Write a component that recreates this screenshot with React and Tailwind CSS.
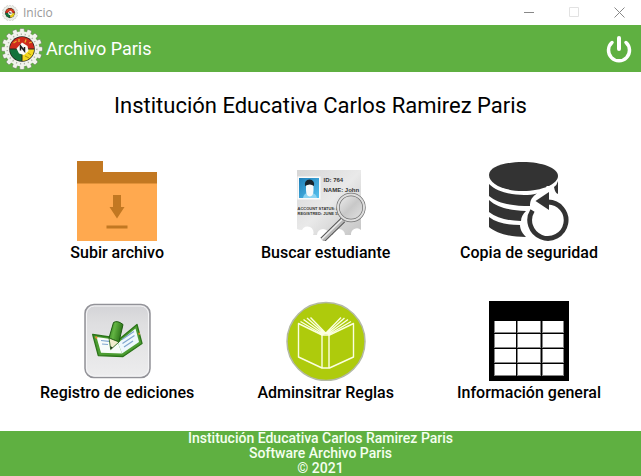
import React from "react";

const teeth = Array.from({ length: 16 }, (_, i) => i * 22.5);

function Crest({ className }) {
  return (
    <svg viewBox="0 0 42 42" className={className} aria-hidden="true">
      {teeth.map((a) => (
        <rect key={a} x="18.700" y="0.500" width="4.600" height="6" rx="1.200" fill="#f1f3ec" stroke="#6b6f64" strokeWidth="0.500" transform={`rotate(${a} 21 21)`} />
      ))}
      <circle cx="21" cy="21" r="17.400" fill="#f1f3ec" />
      <circle cx="21" cy="21" r="14.800" fill="none" stroke="#aeb2a8" strokeWidth="1.500" strokeDasharray="1.200 2.800" />
      <circle cx="21" cy="21" r="12.800" fill="#26271f" />
      <path d="M21 21L8.900 21A12.100 12.100 0 0 1 33.100 21Z" fill="#cf2a1c" />
      <path d="M21 21L8.900 21A12.100 12.100 0 0 0 21 33.100Z" fill="#14733c" />
      <path d="M21 21L33.100 21A12.100 12.100 0 0 1 21 33.100Z" fill="#f3d81d" />
      <path d="M12.500 15l3-2M18 11v3M25 11.500l-1 3M28 15l3-1" stroke="#e8b02a" strokeWidth="1.300" />
      <path d="M9 21h7M26 21h7M21 26v7" stroke="#26271f" strokeWidth="1" />
      <path d="M21 14.500l5.500 3.500 1 5-4.500 4-5-1.500-2.500-5z" fill="#fafaf5" />
      <path d="M19.500 22.500v-4.500l4 5v-4" fill="none" stroke="#1d1d1d" strokeWidth="1.500" />
      <path d="M24 28l4 2M27 25l3 2" stroke="#a89110" strokeWidth="1" />
    </svg>
  );
}

function FolderIcon() {
  return (
    <svg viewBox="0 0 80 80" className="size-20" aria-hidden="true">
      <path d="M0 0h26v11h54v12H0z" fill="#c27822" />
      <path d="M0 22.500h80V80H0z" fill="#ffa94f" />
      <path d="M36 34h8v12h3.500L40 57.500 32.500 46H36zM29.500 64.500h21v3h-21z" fill="#c27822" />
    </svg>
  );
}

function SearchCardIcon() {
  return (
    <svg viewBox="0 0 80 80" className="size-20" aria-hidden="true">
      <defs>
        <linearGradient id="paper" x1="0" y1="0" x2="1" y2="1">
          <stop offset="0" stopColor="#d6d6d6" />
          <stop offset="0.500" stopColor="#e9e9e9" />
          <stop offset="1" stopColor="#c4c4c4" />
        </linearGradient>
        <linearGradient id="photo" x1="0" y1="0" x2="1" y2="1">
          <stop offset="0" stopColor="#1f7fb8" />
          <stop offset="1" stopColor="#55c0ee" />
        </linearGradient>
        <linearGradient id="lens" x1="0" y1="0" x2="1" y2="1">
          <stop offset="0" stopColor="#f2f2f2" />
          <stop offset="0.500" stopColor="#c8c8c8" />
          <stop offset="1" stopColor="#e4e4e4" />
        </linearGradient>
      </defs>
      <path d="M11 9H75V69a6 6 0 0 0-10 5H59a6 6 0 0 0-12 0H43a6 6 0 0 0-12 0H27a6 6 0 0 0-11-5q-3 0-5-1z" fill="url(#paper)" />
      <rect x="11.500" y="15.500" width="23" height="23" fill="#fbfbfb" />
      <rect x="13" y="17" width="20" height="20" fill="url(#photo)" />
      <path d="M17 37q1-5 5-5h3q5 0 6 5z" fill="#8bd3f2" />
      <path d="M20 23h7.500v6q0 6.500-3.700 6.500T20 29z" fill="#f7f9fa" />
      <path d="M19 25q-1-6 4.500-6.500Q29 19 28 25q-4-3-9 0z" fill="#17232b" />
      <g fill="#333" fontFamily="Liberation Sans, sans-serif" fontWeight="700">
        <text x="37.500" y="21" fontSize="6">ID: 764</text>
        <text x="37.500" y="31" fontSize="6">NAME: John</text>
        <text x="11.500" y="49" fontSize="4">ACCOUNT STATUS: ACTIVE</text>
        <text x="11.500" y="53.500" fontSize="4">REGISTRED: JUNE 15, 2009</text>
      </g>
      <path d="M57 59L36.500 79" stroke="#555" strokeWidth="6" />
      <path d="M57 59L36.500 79" stroke="#b9b9b9" strokeWidth="4" />
      <path d="M56 58.500L35.500 78.500" stroke="#efefef" strokeWidth="1.300" />
      <circle cx="65" cy="46.500" r="13" fill="url(#lens)" stroke="#707070" strokeWidth="3.400" />
      <circle cx="65" cy="46.500" r="13" fill="none" stroke="#dfdfdf" strokeWidth="2" />
    </svg>
  );
}

function BackupIcon() {
  return (
    <svg viewBox="0 0 80 80" className="size-20" aria-hidden="true">
      <g fill="#333">
        <path d="M0 14C0 6 15 1 34 1s35 6 35 14S53 30 34 30 0 23 0 14z" />
        <path d="M0 23c8 8 22 11 35 11 5 0 9-.5 13-1.500C43 36 41 39 41 45c-16 0-32-2-41-10z" />
        <path d="M0 39c9 8 20 10 37 11-3 3-5 6-5 10-13 0-24-3-32-9z" />
        <path d="M0 56c8 6 18 8 31 8 0 5 3 9 6 12C20 76 7 72 0 66z" />
        <path d="M69 20v13q-3-1-4-7 3-2 4-6z" />
      </g>
      <path d="M60.500 25v8" stroke="#fff" strokeWidth="6" />
      <path d="M59 41A18.200 18.200 0 1 1 43.500 49.500" fill="none" stroke="#333" strokeWidth="4.800" />
      <path d="M60 31v18L46.500 40z" fill="#333" />
    </svg>
  );
}

function NotebookIcon() {
  return (
    <svg viewBox="0 0 80 80" className="size-20" aria-hidden="true">
      <defs>
        <linearGradient id="tile" x1="0" y1="0" x2="0" y2="1">
          <stop offset="0" stopColor="#d3d3d6" />
          <stop offset="0.250" stopColor="#dedee0" />
          <stop offset="1" stopColor="#ededee" />
        </linearGradient>
        <linearGradient id="pencil" x1="0" y1="0" x2="1" y2="0.300">
          <stop offset="0" stopColor="#2c7519" />
          <stop offset="0.450" stopColor="#62b442" />
          <stop offset="1" stopColor="#2a7017" />
        </linearGradient>
      </defs>
      <rect x="8" y="3.500" width="65" height="73" rx="9" fill="url(#tile)" stroke="#929298" strokeWidth="1.500" />
      <rect x="9.500" y="5" width="62" height="70" rx="8" fill="none" stroke="#f5f5f7" strokeWidth="1" />
      <path d="M15.700 33.500l17 2.500 8 3.500L60 23.500l5 19-19 13L21.300 54.700z" fill="#4c9d32" stroke="#2b7419" strokeWidth="1.300" strokeLinejoin="round" />
      <path d="M19.500 36l14 2 7.500 4 4 10.500-21-.8z" fill="#f8fcfa" />
      <path d="M41 42l17.500-14.500L62 41 45 52.500z" fill="#eef8fc" />
      <path d="M24 39.500l8 .8M25 43l6 .5M45 38.500l12-8M45.500 42.500l12-8M47 46l9-6" stroke="#7fa6cf" strokeWidth="1.200" />
      <path d="M36.500 21.500q4-2.500 9.500 2L42 41l-10-4z" fill="url(#pencil)" stroke="#1d5c11" strokeWidth="1" strokeLinejoin="round" />
      <path d="M32 37l10 4-8.300 7.500z" fill="#f2edce" stroke="#286519" strokeWidth="0.900" strokeLinejoin="round" />
      <path d="M33.300 45l2.500 1.500-2.100 2z" fill="#243b1d" />
      <path d="M18.500 35.500l1.500 2M61.500 33l1.500-.5" stroke="#e48b37" strokeWidth="2" />
    </svg>
  );
}

function BookIcon() {
  return (
    <svg viewBox="0 0 80 80" className="size-20" aria-hidden="true">
      <circle cx="40" cy="40.500" r="39" fill="#aecb0c" stroke="#b3b9a4" strokeWidth="1.500" />
      <g fill="none" stroke="#fbffe0" strokeWidth="1.400" strokeLinejoin="round">
        <path d="M36 34L12.500 22.500v33.500L36 67h7.500L67.500 56V22.500L43.500 34z" />
        <path d="M36 34v33M43 34v33" />
        <path d="M36.500 33.500L14.500 20.500M37.500 33L17.500 18.500M38.500 32.500L21 17M39.500 32L24.500 16.500M43 33.500L65 20.500M42 33L62 18.500M41 32.500L58.500 17M40 32L55 16.500M36 34q4-3 7.500 0" />
      </g>
    </svg>
  );
}

function TableIcon() {
  const rows = [[20, 12], [33, 14], [48, 14], [63, 12]];
  return (
    <svg viewBox="0 0 80 80" className="size-20" aria-hidden="true" shapeRendering="crispEdges">
      <path d="M0 0h80v80H0z" fill="#000" />
      {rows.map(([y, h]) => (
        <g key={y}>
          <path d={`M5 ${y}h22v${h}H5zM28 ${y}h24v${h}H28zM53 ${y}h22v${h}H53z`} fill="#858585" />
          <path d={`M6 ${y}h21v${h - 1}H6zM29 ${y}h22v${h - 1}H29zM54 ${y}h20v${h - 1}H54z`} fill="#fff" />
        </g>
      ))}
    </svg>
  );
}

const actions = [
  { label: "Subir archivo", Icon: FolderIcon },
  { label: "Buscar estudiante", Icon: SearchCardIcon },
  { label: "Copia de seguridad", Icon: BackupIcon },
  { label: "Registro de ediciones", Icon: NotebookIcon },
  { label: "Adminsitrar Reglas", Icon: BookIcon },
  { label: "Información general", Icon: TableIcon },
];

export default function App() {
  return (
    <div className="flex min-h-screen flex-col bg-white font-['Roboto',sans-serif] text-black">
      <div className="flex h-[25px] items-center pl-0.5 text-[#999]">
        <Crest className="size-4" />
        <span className="ml-[5px] flex-1 font-['Open_Sans',sans-serif] text-xs">Inicio</span>
        <button type="button" aria-label="Minimizar" className="flex h-full w-[45px] items-center justify-center pl-0.5">
          <svg viewBox="0 0 11 11" className="size-[11px]"><path d="M0 5.500h10" stroke="#888" /></svg>
        </button>
        <button type="button" aria-label="Maximizar" disabled className="flex h-full w-[45px] items-center justify-center pl-0.5">
          <svg viewBox="0 0 11 11" className="size-[11px]"><path d="M.5.500h9v9h-9z" fill="none" stroke="#e2e2e2" /></svg>
        </button>
        <button type="button" aria-label="Cerrar" className="flex h-full w-[45px] items-center justify-center pl-0.5">
          <svg viewBox="0 0 11 11" className="size-[11px]"><path d="M.5.500l10 10M10.500.500l-10 10" stroke="#888" /></svg>
        </button>
      </div>

      <header className="flex h-[47px] items-center bg-[#5fb041] pr-2 text-white">
        <Crest className="ml-px size-[42px]" />
        <span className="ml-[3px] flex-1 text-lg">Archivo Paris</span>
        <button type="button" aria-label="Salir" className="flex size-7 items-center justify-center">
          <svg viewBox="0 0 28 28" className="size-7" fill="none" stroke="#fff" strokeWidth="3.500" strokeLinecap="round">
            <path d="M14 3v11" strokeWidth="4" />
            <path d="M7 7.500A10.500 10.500 0 1 0 21 7.500" />
          </svg>
        </button>
      </header>

      <main className="flex flex-1 flex-col">
        <h1 className="mt-5 text-center text-[22px] leading-7">Institución Educativa Carlos Ramirez Paris</h1>
        <div className="mt-[41px] grid grid-cols-[auto_auto_auto] justify-between gap-y-[38px] px-10">
          {actions.map(({ label, Icon }) => (
            <button key={label} type="button" className="flex flex-col items-center">
              <Icon />
              <span className="mt-0.5 text-base leading-5 font-medium">{label}</span>
            </button>
          ))}
        </div>
      </main>

      <footer className="bg-[#5fb041] text-center text-sm leading-[15px] font-medium text-[#f4ffef]">
        <p>Institución Educativa Carlos Ramirez Paris</p>
        <p>Software Archivo Paris</p>
        <p>© 2021</p>
      </footer>
    </div>
  );
}
